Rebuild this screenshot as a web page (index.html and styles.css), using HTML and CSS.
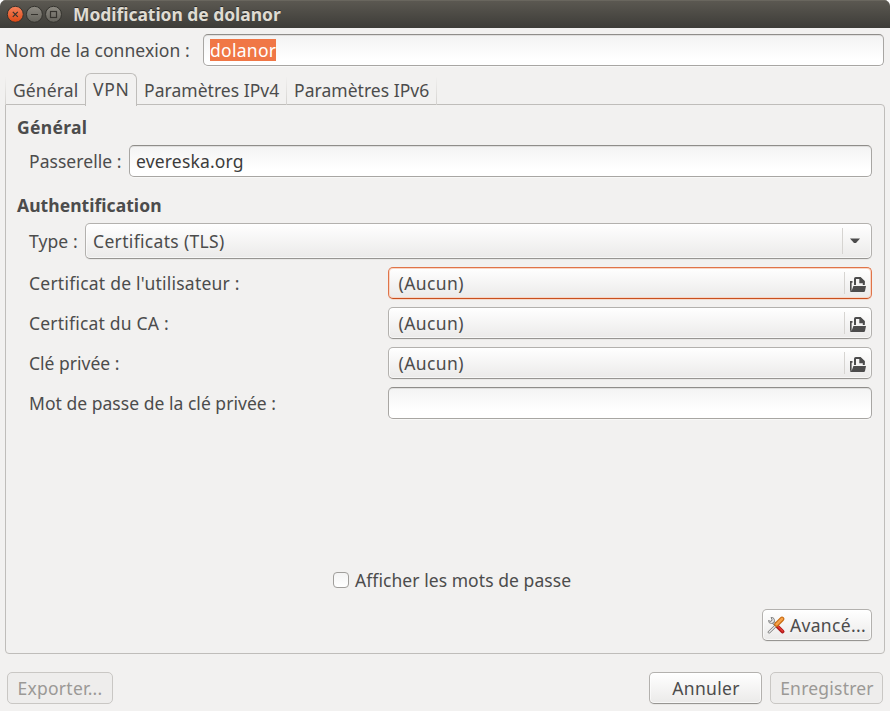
FILE: index.html
```
<!DOCTYPE html>
<html lang="fr">
<head>
<meta charset="utf-8">
<title>Modification de dolanor</title>
<link rel="stylesheet" href="styles.css">
</head>
<body>
<svg class="defs" aria-hidden="true">
  <symbol id="folder" viewBox="0 0 16 16">
    <path d="M0 4h2.500v1.700h-.9V14H1q-1 0-1-1z" fill="#4c4c4c"/>
    <path d="M5 8V1.800Q5 1 5.800 1H10.200L13.800 4.500V8" fill="none" stroke="#4c4c4c" stroke-width="2"/>
    <path d="M9.300 1h1.700l3.500 3.700V6.300H9.300z" fill="#4c4c4c"/>
    <path d="M3.400 9H16l-1 5q-.2 1-1.200 1H1.200Q.2 15 0 14l1.800-.5z" fill="#4c4c4c"/>
  </symbol>
</svg>
<div class="window">
  <header class="titlebar">
    <svg class="controls" viewBox="0 0 56 18">
      <defs>
        <linearGradient id="closeFill" x2="0" y2="1"><stop offset="0" stop-color="#f5835d"/><stop offset="1" stop-color="#dd4814"/></linearGradient>
        <linearGradient id="greyFill" x2="0" y2="1"><stop offset="0" stop-color="#8d8a82"/><stop offset="1" stop-color="#65635c"/></linearGradient>
      </defs>
      <g stroke="#34332e" stroke-width="1">
        <circle cx="9.300" cy="9.300" r="8" fill="url(#closeFill)"/>
        <circle cx="28.400" cy="9.300" r="8" fill="url(#greyFill)"/>
        <circle cx="47.500" cy="9.300" r="8" fill="url(#greyFill)"/>
      </g>
      <g fill="none" stroke="#35332e" stroke-width="1.200">
        <path d="M6.800 6.800l5 5m0-5l-5 5"/>
        <path d="M25 9.500h7"/>
        <rect x="44.500" y="6.500" width="6" height="6"/>
      </g>
    </svg>
    <h1 class="title">Modification de dolanor</h1>
  </header>

  <div class="name-row">
    <label class="name-label">Nom de la connexion :</label>
    <div class="entry name-entry"><span class="selection">dolanor</span></div>
  </div>

  <nav class="tabs">
    <div class="tab tab-general">Général</div>
    <div class="tab tab-active">VPN</div>
    <div class="tab tab-ip">Paramètres IPv4</div>
    <div class="tab tab-ip">Paramètres IPv6</div>
  </nav>

  <main class="panel">
    <h2 class="heading heading-general">Général</h2>
    <div class="row gateway-row">
      <label class="gateway-label">Passerelle :</label>
      <div class="entry gateway-entry">evereska.org</div>
    </div>
    <h2 class="heading heading-auth">Authentification</h2>
    <div class="row type-row">
      <label class="type-label">Type :</label>
      <div class="button combo"><span class="combo-text">Certificats (TLS)</span><span class="combo-arrow"><svg class="arrow" viewBox="0 0 10 6"><path d="M0 .5h10L6 5H4z"/></svg></span></div>
    </div>
    <div class="grid">
      <label class="label-user">Certificat de l'utilisateur :</label>
      <div class="button file file-focus"><span class="file-text">(Aucun)</span><span class="file-icon"><svg class="folder"><use href="#folder"/></svg></span></div>
      <label class="label-ca">Certificat du CA :</label>
      <div class="button file"><span class="file-text">(Aucun)</span><span class="file-icon"><svg class="folder"><use href="#folder"/></svg></span></div>
      <label>Clé privée :</label>
      <div class="button file"><span class="file-text">(Aucun)</span><span class="file-icon"><svg class="folder"><use href="#folder"/></svg></span></div>
      <label class="label-password">Mot de passe de la clé privée :</label>
      <div class="entry"></div>
    </div>
    <div class="show-row"><span class="checkbox"></span><label class="show-label">Afficher les mots de passe</label></div>
    <div class="button advanced">
      <svg class="tools" viewBox="0 0 18 18">
        <path d="M5.500 5.500L15.500 15.500" stroke="#777" stroke-width="3.200" stroke-linecap="round"/>
        <path d="M5.500 5.500L15.500 15.500" stroke="#e8e8e6" stroke-width="1.600" stroke-linecap="round"/>
        <path d="M4 1.500a3 3 0 1 1-2.500 3L4 5.500 5.200 4z" fill="#eee" stroke="#777" stroke-width=".9"/>
        <path d="M11 11l4.500 4.500" stroke="#b71c1c" stroke-width="3.800" stroke-linecap="round"/>
        <path d="M11 10.500l4.500 4.500" stroke="#e43b32" stroke-width="1.500" stroke-linecap="round"/>
        <path d="M9 9.500L2 16.200" stroke="#777" stroke-width="2.600" stroke-linecap="round"/>
        <path d="M9 9.500L2 16.200" stroke="#eee" stroke-width="1.200" stroke-linecap="round"/>
        <path d="M9.500 8.500L15 3" stroke="#c76a10" stroke-width="4.600" stroke-linecap="round"/>
        <path d="M9.500 8.300L15 2.800" stroke="#f6a24a" stroke-width="2.600" stroke-linecap="round"/>
      </svg>
      <span class="advanced-text">Avancé...</span>
    </div>
  </main>

  <footer class="actions">
    <div class="button export disabled">Exporter...</div>
    <div class="button cancel">Annuler</div>
    <div class="button save disabled">Enregistrer</div>
  </footer>
</div>
</body>
</html>
```
FILE: styles.css
```
* { box-sizing: border-box; }
body {
  margin: 0;
  background: #fff;
  color: #4c4c4c;
  font: 17.5px/24px "Noto Sans", "Open Sans", sans-serif;
  white-space: nowrap;
}
.defs { display: none; }
.window {
  width: 890px;
  height: 711px;
  overflow: hidden;
  background: #f2f1f0;
  border-radius: 6px 6px 0 0;
}
.titlebar {
  height: 28px;
  display: flex;
  align-items: center;
  padding-left: 6px;
  background: linear-gradient(#5c5952, #3d3c38);
  box-shadow: inset 0 1px #69665e;
}
.controls { width: 56px; height: 18px; }
.title {
  margin: 0 0 0 11px;
  font-size: 17.5px;
  font-weight: 700;
  letter-spacing: -.05px;
  color: #dfdbd2;
  text-shadow: 0 -1px #2d2c29;
}
.name-row {
  display: flex;
  align-items: center;
  padding: 6px 6px 0 5px;
}
.name-label { width: 198px; letter-spacing: .06px; }
.entry {
  height: 32px;
  display: flex;
  align-items: center;
  border: 1px solid #a8a6a3;
  border-top-color: #8f8d8a;
  border-radius: 5px;
  background: linear-gradient(#f3f3f3, #fff 80%);
  box-shadow: inset 0 1px #e0dfde, 0 1px #f8f8f7;
  color: #3c3c3c;
}
.name-entry { flex: 1; padding-left: 6px; }
.selection {
  width: 66px;
  height: 22px;
  line-height: 22px;
  background: #f07746;
  color: #fff;
  letter-spacing: .28px;
}
.tabs {
  display: flex;
  align-items: flex-end;
  height: 39px;
  padding-left: 5px;
}
.tab {
  height: 28px;
  padding: 1px 0 0 7px;
  border-right: 1px solid;
  border-image: linear-gradient(#f2f1f000, #d3d1ce) 1;
}
.tab-general {
  width: 80px;
  border-width: 0 0 0 1px;
  border-style: solid;
  letter-spacing: .12px;
}
.tab-active {
  position: relative;
  width: 52px;
  height: 33px;
  margin-bottom: -1px;
  padding: 3px 0 0 7px;
  border: 1px solid #bfbdba;
  border-bottom: 0;
  border-image: none;
  border-radius: 6px 6px 0 0;
  background: #f2f1f0;
  letter-spacing: .7px;
}
.tab-ip { width: 150px; padding-left: 7px; letter-spacing: .04px; }
.panel {
  width: 880px;
  height: 550px;
  margin: -1px 0 0 5px;
  padding: 10px 12px 12px 11px;
  border: 1px solid #bfbdba;
  border-radius: 0 4px 4px 4px;
}
.heading { margin: 0; font-size: 17.5px; line-height: 24px; }
.heading-general { letter-spacing: .3px; }
.heading-auth { margin-top: 16px; letter-spacing: .05px; }
.row { display: flex; align-items: center; padding-left: 12px; }
.gateway-row { margin-top: 6px; }
.gateway-label { width: 100px; letter-spacing: .05px; }
.gateway-entry { flex: 1; padding-left: 6px; letter-spacing: .17px; }
.type-row { margin-top: 6px; }
.type-label { width: 56px; letter-spacing: .1px; }
.button {
  height: 32px;
  display: flex;
  align-items: center;
  border: 1px solid #b3b1ae;
  border-bottom-color: #979592;
  border-radius: 5px;
  background: linear-gradient(#fff, #ebeae9);
  box-shadow: inset 0 0 0 1px #ffffff99, 0 1px #e8e7e5;
}
.combo { flex: 1; height: 36px; padding-left: 7px; }
.combo-text { flex: 1; letter-spacing: .33px; }
.combo-arrow {
  width: 29px;
  height: 26px;
  display: flex;
  align-items: center;
  padding: 0 0 0 7px;
  border-left: 1px solid #d6d4d1;
}
.arrow { width: 10px; height: 6px; fill: #4c4c4c; }
.grid {
  display: grid;
  grid-template-columns: 359px 484px;
  gap: 8px 0;
  align-items: center;
  margin-top: 8px;
  padding-left: 12px;
}
.label-user { letter-spacing: .23px; }
.label-ca { letter-spacing: .2px; }
.label-password { letter-spacing: .03px; }
.file { padding-left: 9.5px; }
.file-focus {
  border-color: #e07448;
  border-bottom-color: #c8501e;
  box-shadow: inset 0 0 0 1px #f8d5c5, 0 1px #f3d9cd;
}
.file-text { flex: 1; letter-spacing: .42px; }
.file-icon {
  width: 27px;
  height: 22px;
  padding: 5px 0 0 5px;
  border-left: 1px solid #d6d4d1;
  line-height: 0;
}
.folder { width: 16px; height: 16px; }
.show-row {
  display: flex;
  align-items: center;
  height: 24px;
  margin: 149px 0 0 316px;
}
.checkbox {
  width: 16px;
  height: 16px;
  margin-right: 6px;
  border: 1px solid #a09e9b;
  border-radius: 4px;
  background: linear-gradient(#f4f4f4, #fff);
}
.show-label { letter-spacing: .06px; }
.advanced {
  width: 110px;
  margin: 17px 0 0 auto;
  padding-left: 4px;
}
.tools { width: 18px; height: 18px; margin-right: 5px; fill: none; }
.advanced-text { letter-spacing: .32px; }
.actions {
  display: flex;
  gap: 8px;
  padding: 18px 7px 0;
}
.actions .button { justify-content: center; }
.export { width: 106px; margin-right: auto; letter-spacing: .25px; }
.cancel { width: 113px; padding-left: 1px; letter-spacing: .3px; }
.save { width: 113px; padding-left: 1px; letter-spacing: .22px; }
.disabled {
  color: #9b9996;
  border-color: #c9c7c4;
  background: #eeedec;
  box-shadow: none;
}
```
